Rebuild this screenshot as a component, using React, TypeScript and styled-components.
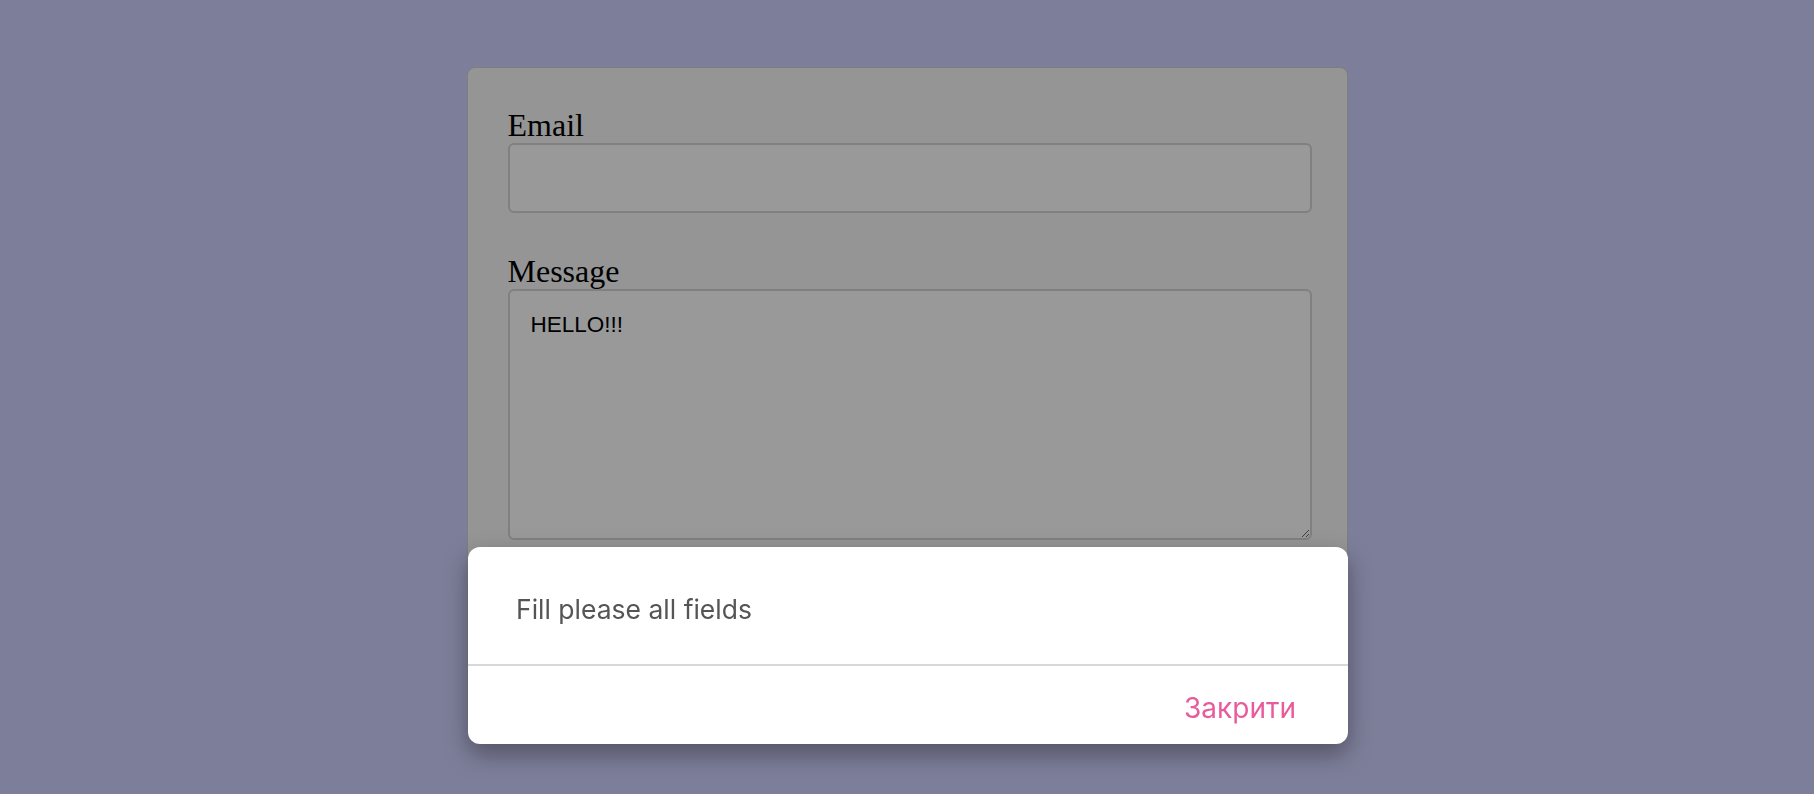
import React from "react";
import styled, { createGlobalStyle } from "styled-components";

const Global = createGlobalStyle`
  html, body {
    margin: 0;
    padding: 0;
    background: #d0d2ff;
    height: 100%;
  }
  body {
    font-family: "Liberation Serif", "Times New Roman", serif;
    overflow: hidden;
  }
  * { box-sizing: border-box; }
`;

const Page = styled.main`
  display: flex;
  justify-content: center;
  padding-top: 67px;
  min-height: 794px;
`;

const Card = styled.form`
  width: 881px;
  height: 660px;
  background: #f8f8f8;
  border: 1px solid #d2d2d2;
  border-radius: 8px;
  padding: 39px 36px 40px 40px;
  display: flex;
  flex-direction: column;
  gap: 40px;
`;

const Field = styled.div`
  display: flex;
  flex-direction: column;
`;

const Label = styled.label`
  font-family: "Liberation Serif", "Times New Roman", serif;
  font-size: 32px;
  line-height: 36px;
  color: #000;
`;

const TextInput = styled.input`
  width: 804px;
  height: 70px;
  border: 2px solid #d5d5d5;
  border-radius: 6px;
  background: #ffffff;
  padding: 0 20px;
  font-family: "Liberation Sans", Arial, sans-serif;
  font-size: 22px;
  outline: none;
`;

const TextArea = styled.textarea`
  width: 804px;
  height: 251px;
  border: 2px solid #d5d5d5;
  border-radius: 6px;
  background: #ffffff;
  padding: 21px 21px 20px;
  font-family: "Liberation Sans", Arial, sans-serif;
  font-size: 22.5px;
  line-height: 26px;
  color: #000;
  outline: none;
  resize: both;
`;

const Backdrop = styled.div`
  position: fixed;
  inset: 0;
  background: rgba(0, 0, 0, 0.4);
`;

const Dialog = styled.div`
  position: fixed;
  left: 50%;
  bottom: 50px;
  transform: translateX(-50%);
  margin-left: 1px;
  width: 880px;
  background: #ffffff;
  border-radius: 12px;
  box-shadow: 0 10px 24px rgba(0, 0, 0, 0.35);
  overflow: hidden;
  font-family: "Inter", "Noto Sans", sans-serif;
`;

const DialogBody = styled.div`
  height: 119px;
  display: flex;
  align-items: center;
  padding: 6px 48px 0 48px;
  font-size: 26.5px;
  color: #555555;
  border-bottom: 2px solid #d8d8d8;
`;

const DialogActions = styled.div`
  height: 78px;
  display: flex;
  justify-content: flex-end;
  align-items: center;
  padding: 0 52px 0 0;
`;

const ActionButton = styled.button`
  background: none;
  border: none;
  padding: 0;
  margin-top: 5px;
  font-family: "Inter", "Noto Sans", sans-serif;
  font-size: 28px;
  color: #e85c9d;
  cursor: pointer;
`;

export default function App() {
  return (
    <>
      <Global />
      <Page>
        <Card onSubmit={(e) => e.preventDefault()}>
          <Field>
            <Label htmlFor="email">Email</Label>
            <TextInput id="email" type="email" />
          </Field>
          <Field>
            <Label htmlFor="message">Message</Label>
            <TextArea id="message" defaultValue="HELLO!!!" />
          </Field>
        </Card>
      </Page>
      <Backdrop />
      <Dialog role="alertdialog">
        <DialogBody>Fill please all fields</DialogBody>
        <DialogActions>
          <ActionButton type="button">Закрити</ActionButton>
        </DialogActions>
      </Dialog>
    </>
  );
}
